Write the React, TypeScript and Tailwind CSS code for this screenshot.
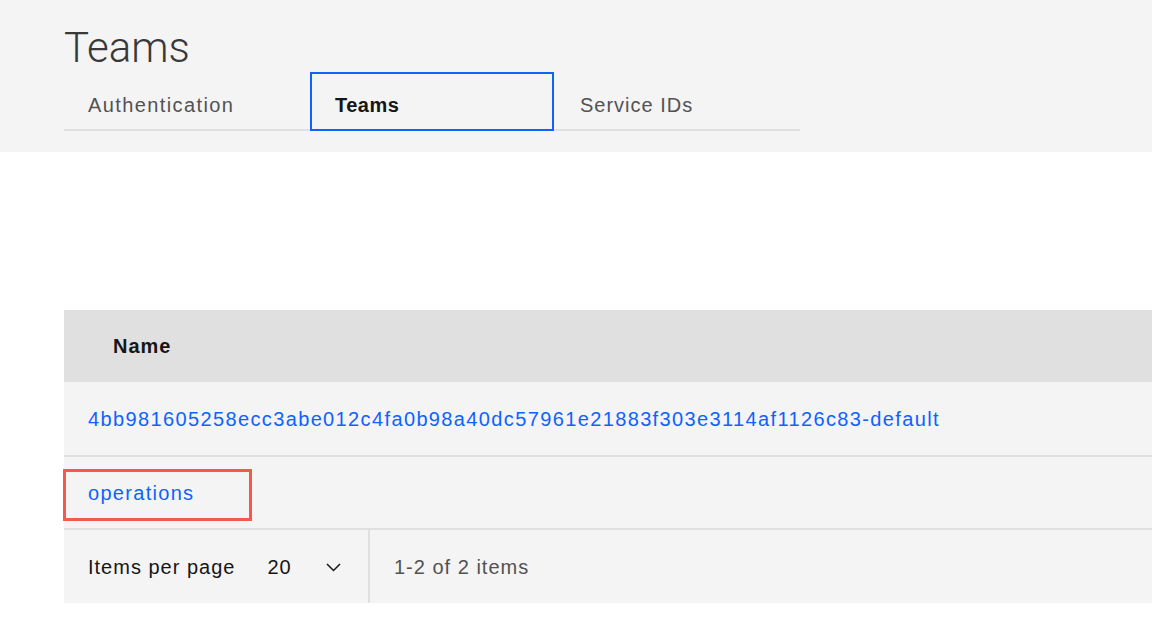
import React from 'react';

const body = { fontFamily: '"Liberation Sans", Arial, sans-serif' };
const light = { fontFamily: 'Roboto, "Liberation Sans", sans-serif' };

export default function App() {
  const tabs = [
    { label: 'Authentication', w: 'w-[246px] pl-[24px] tracking-[1.4px]', active: false },
    { label: 'Teams', w: 'w-[244px] pl-[23px] tracking-[0.5px]', active: true },
    { label: 'Service IDs', w: 'w-[246px] pl-[26px] tracking-[1px]', active: false },
  ];

  return (
    <div className="min-h-[622px] w-[1152px] overflow-hidden bg-white" style={body}>
      {/* Header */}
      <div className="bg-[#f4f4f4] pl-[64px] pt-[24px] pb-[21px]">
        <h1 className="h-[48px] text-[42px] font-light leading-[48px] text-[#393939]" style={light}>
          Teams
        </h1>
        <div className="flex">
          {tabs.map((t) =>
            t.active ? (
              <div
                key={t.label}
                className={`${t.w} h-[59px] border-2 border-[#0f62fe] pt-[19px] text-[20px] leading-[24px] font-bold text-[#161616]`}
              >
                {t.label}
              </div>
            ) : (
              <div
                key={t.label}
                className={`${t.w} h-[59px] border-b-2 border-[#e0e0e0] pt-[21px] text-[20px] leading-[24px] text-[#525252]`}
              >
                {t.label}
              </div>
            )
          )}
        </div>
      </div>

      {/* Table */}
      <div className="mt-[158px] ml-[64px]">
        <div className="flex h-[72px] items-center bg-[#e0e0e0] pl-[49px] text-[20px] font-bold tracking-[1px] text-[#161616]">
          Name
        </div>
        <div className="flex h-[75px] items-center border-b-2 border-[#e0e0e0] bg-[#f4f4f4] pl-[24px]">
          <a className="text-[20px] tracking-[1.37px] text-[#0f62fe]">
            4bb981605258ecc3abe012c4fa0b98a40dc57961e21883f303e3114af1126c83-default
          </a>
        </div>
        <div className="relative flex h-[73px] items-center border-b-2 border-[#e0e0e0] bg-[#f4f4f4] pl-[24px]">
          <a className="text-[20px] tracking-[1.3px] text-[#0f62fe]">operations</a>
          {/* annotation box */}
          <div className="absolute left-[-1px] top-[12px] h-[52px] w-[189px] border-[3px] border-[#f25a4c]" />
        </div>
        <div className="flex h-[73px] bg-[#f4f4f4] text-[20px] tracking-[1px]">
          <div className="flex w-[306px] items-center border-r-2 border-[#e0e0e0] pl-[24px] text-[#161616]">
            <span>Items per page</span>
            <span className="ml-[32px]">20</span>
            <svg className="ml-[34px] mt-[2px]" width="15" height="9" viewBox="0 0 15 9" fill="none">
              <path d="M1 1l6.5 6.5L14 1" stroke="#161616" strokeWidth="1.5" />
            </svg>
          </div>
          <div className="flex items-center pl-[24px] text-[#525252]">1-2 of 2 items</div>
        </div>
      </div>
    </div>
  );
}
